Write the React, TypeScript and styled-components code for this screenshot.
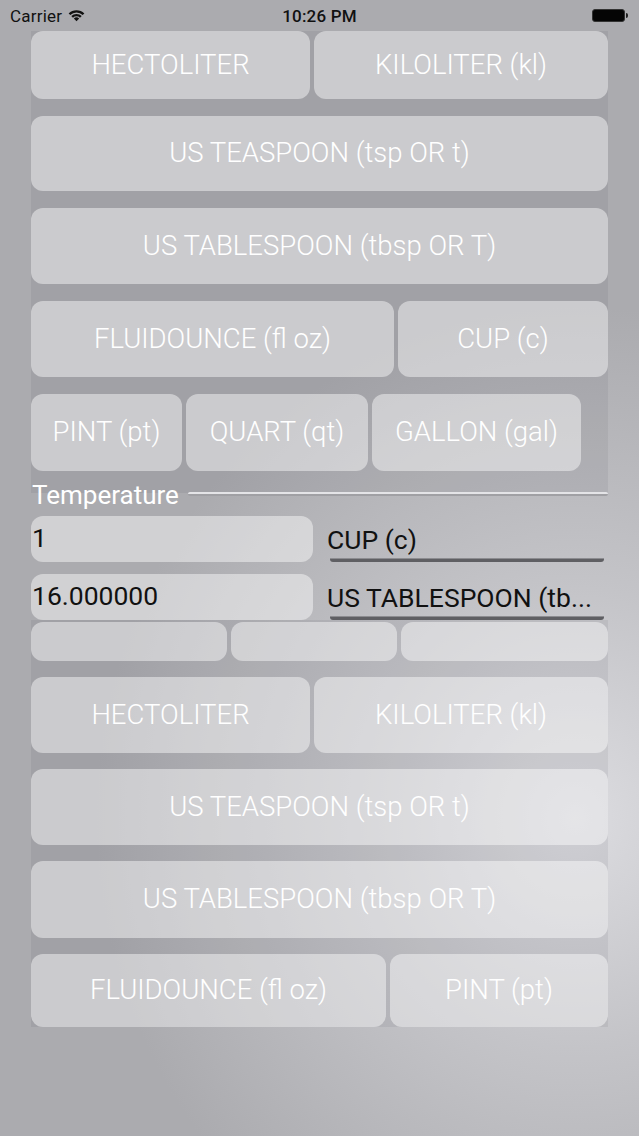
import React from "react";
import styled, { createGlobalStyle } from "styled-components";

const Global = createGlobalStyle`
  html, body { margin: 0; padding: 0; }
  body { font-family: Roboto, "Liberation Sans", Arial, sans-serif; }
  * { box-sizing: border-box; }
`;

const Page = styled.div`
  width: 639px;
  height: 1136px;
  overflow: hidden;
  background: radial-gradient(ellipse 75% 45% at 90% 72%, #dcdce0 0%, #c4c4c8 45%, #ababaf 100%),
    #ababaf;
  display: flex;
  flex-direction: column;
`;

const StatusBar = styled.div`
  height: 31px;
  flex: none;
  display: grid;
  grid-template-columns: 1fr auto 1fr;
  align-items: center;
  padding: 0 10px 0 10px;
  font-size: 17px;
  color: #111;
`;

const Carrier = styled.div`
  display: flex;
  align-items: center;
  gap: 6px;
  letter-spacing: 0.2px;
`;

const Time = styled.div`
  font-weight: 500;
  letter-spacing: 0.2px;
`;

const BatteryWrap = styled.div`
  display: flex;
  justify-content: flex-end;
  align-items: center;
  padding-right: 1px;
`;

const BatteryBody = styled.div`
  width: 33px;
  height: 13px;
  border-radius: 3px;
  background: #050505;
  border: 1px solid #333;
`;

const BatteryNub = styled.div`
  width: 2px;
  height: 5px;
  border-radius: 0 2px 2px 0;
  background: #222;
  margin-left: 1px;
`;

const Panel = styled.div<{ $padBottom: number; $gap: number }>`
  margin: 0 31px;
  background: rgba(40, 40, 50, 0.07);
  display: flex;
  flex-direction: column;
  gap: ${(p) => p.$gap}px;
  padding-bottom: ${(p) => p.$padBottom}px;
  overflow: hidden;
  flex: none;
`;

const Row = styled.div<{ $h: number; $cols: string; $mt?: number }>`
  display: grid;
  grid-template-columns: ${(p) => p.$cols};
  column-gap: 4px;
  height: ${(p) => p.$h}px;
  margin-top: ${(p) => p.$mt ?? 0}px;
`;

const UnitButton = styled.div`
  border-radius: 12px;
  background: rgba(255, 255, 255, 0.45);
  color: #fff;
  font-weight: 300;
  font-size: 27.5px;
  display: flex;
  align-items: center;
  justify-content: center;
  padding-bottom: 2px;
  white-space: nowrap;
  overflow: hidden;
`;

const TempHeader = styled.div`
  margin: -11px 31px 0 32px;
  height: 22px;
  display: flex;
  align-items: center;
  gap: 9px;
  flex: none;
`;

const TempLabel = styled.div`
  color: #fff;
  font-size: 26px;
  font-weight: 400;
  line-height: 22px;
  margin-top: 3px;
`;

const TempLine = styled.div`
  flex: 1;
  height: 4px;
  margin-top: 2px;
  border-radius: 2px;
  background: linear-gradient(#e4e4e7 0 50%, #a0a0a4 50% 100%);
`;

const InputRow = styled.div<{ $mt: number }>`
  margin: ${(p) => p.$mt}px 31px 0 31px;
  height: 46px;
  display: grid;
  grid-template-columns: 282px 1fr;
  column-gap: 14px;
  flex: none;
`;

const ValueBox = styled.div`
  border-radius: 12px;
  background: rgba(255, 255, 255, 0.45);
  display: flex;
  align-items: center;
  padding-left: 1px;
  padding-bottom: 4px;
  font-size: 26.5px;
  color: #111;
`;

const Picker = styled.div`
  display: flex;
  flex-direction: column;
  justify-content: flex-end;
  padding-right: 4px;
`;

const PickerText = styled.div`
  font-size: 26.5px;
  color: #111;
  line-height: 30px;
  white-space: nowrap;
  overflow: hidden;
  padding-bottom: 3px;
`;

const PickerBar = styled.div`
  height: 4px;
  margin-left: 3px;
  border-radius: 0 0 3px 3px;
  background: linear-gradient(#8c8c90 0 25%, #5f5f63 25% 100%);
`;

const Wifi = () => (
  <svg width="17" height="13" viewBox="0 0 16 12">
    <path d="M0.6 4.0 A10.5 10.5 0 0 1 15.4 4.0 L13.8 5.6 A8.2 8.2 0 0 0 2.2 5.6 Z" fill="#111" />
    <path d="M3.1 6.5 A7 7 0 0 1 12.9 6.5 L11.3 8.0 A4.8 4.8 0 0 0 4.7 8.0 Z" fill="#111" />
    <path d="M5.5 8.9 A3.6 3.6 0 0 1 10.5 8.9 L8 11.5 Z" fill="#111" />
  </svg>
);

type RowDef = { h: number; items: string[]; cols: string };

const topRows: RowDef[] = [
  { h: 68, items: ["HECTOLITER", "KILOLITER (kl)"], cols: "279px 1fr" },
  { h: 75, items: ["US TEASPOON (tsp OR t)"], cols: "1fr" },
  { h: 76, items: ["US TABLESPOON (tbsp OR T)"], cols: "1fr" },
  { h: 76, items: ["FLUIDOUNCE (fl oz)", "CUP (c)"], cols: "363px 1fr" },
  { h: 77, items: ["PINT (pt)", "QUART (qt)", "GALLON (gal)"], cols: "151px 182px 209px" },
];

const bottomRows: RowDef[] = [
  { h: 76, items: ["HECTOLITER", "KILOLITER (kl)"], cols: "279px 1fr" },
  { h: 76, items: ["US TEASPOON (tsp OR t)"], cols: "1fr" },
  { h: 77, items: ["US TABLESPOON (tbsp OR T)"], cols: "1fr" },
  { h: 73, items: ["FLUIDOUNCE (fl oz)", "PINT (pt)"], cols: "355px 1fr" },
];

const renderRows = (rows: RowDef[]) =>
  rows.map((r, i) => (
    <Row key={i} $h={r.h} $cols={r.cols}>
      {r.items.map((t) => (
        <UnitButton key={t}>{t}</UnitButton>
      ))}
    </Row>
  ));

export default function App() {
  return (
    <>
      <Global />
      <Page>
        <StatusBar>
          <Carrier>
            Carrier <Wifi />
          </Carrier>
          <Time>10:26 PM</Time>
          <BatteryWrap>
            <BatteryBody />
            <BatteryNub />
          </BatteryWrap>
        </StatusBar>

        <Panel $padBottom={22} $gap={17}>
          {renderRows(topRows)}
        </Panel>

        <TempHeader>
          <TempLabel>Temperature</TempLabel>
          <TempLine />
        </TempHeader>

        <InputRow $mt={12}>
          <ValueBox>1</ValueBox>
          <Picker>
            <PickerText>CUP (c)</PickerText>
            <PickerBar />
          </Picker>
        </InputRow>
        <InputRow $mt={12}>
          <ValueBox>16.000000</ValueBox>
          <Picker>
            <PickerText>US TABLESPOON (tb...</PickerText>
            <PickerBar />
          </Picker>
        </InputRow>

        <Panel $padBottom={0} $gap={16}>
          <Row $h={39} $cols="196px 166px 1fr" $mt={2}>
            <UnitButton />
            <UnitButton />
            <UnitButton />
          </Row>
          {renderRows(bottomRows)}
        </Panel>
      </Page>
    </>
  );
}
